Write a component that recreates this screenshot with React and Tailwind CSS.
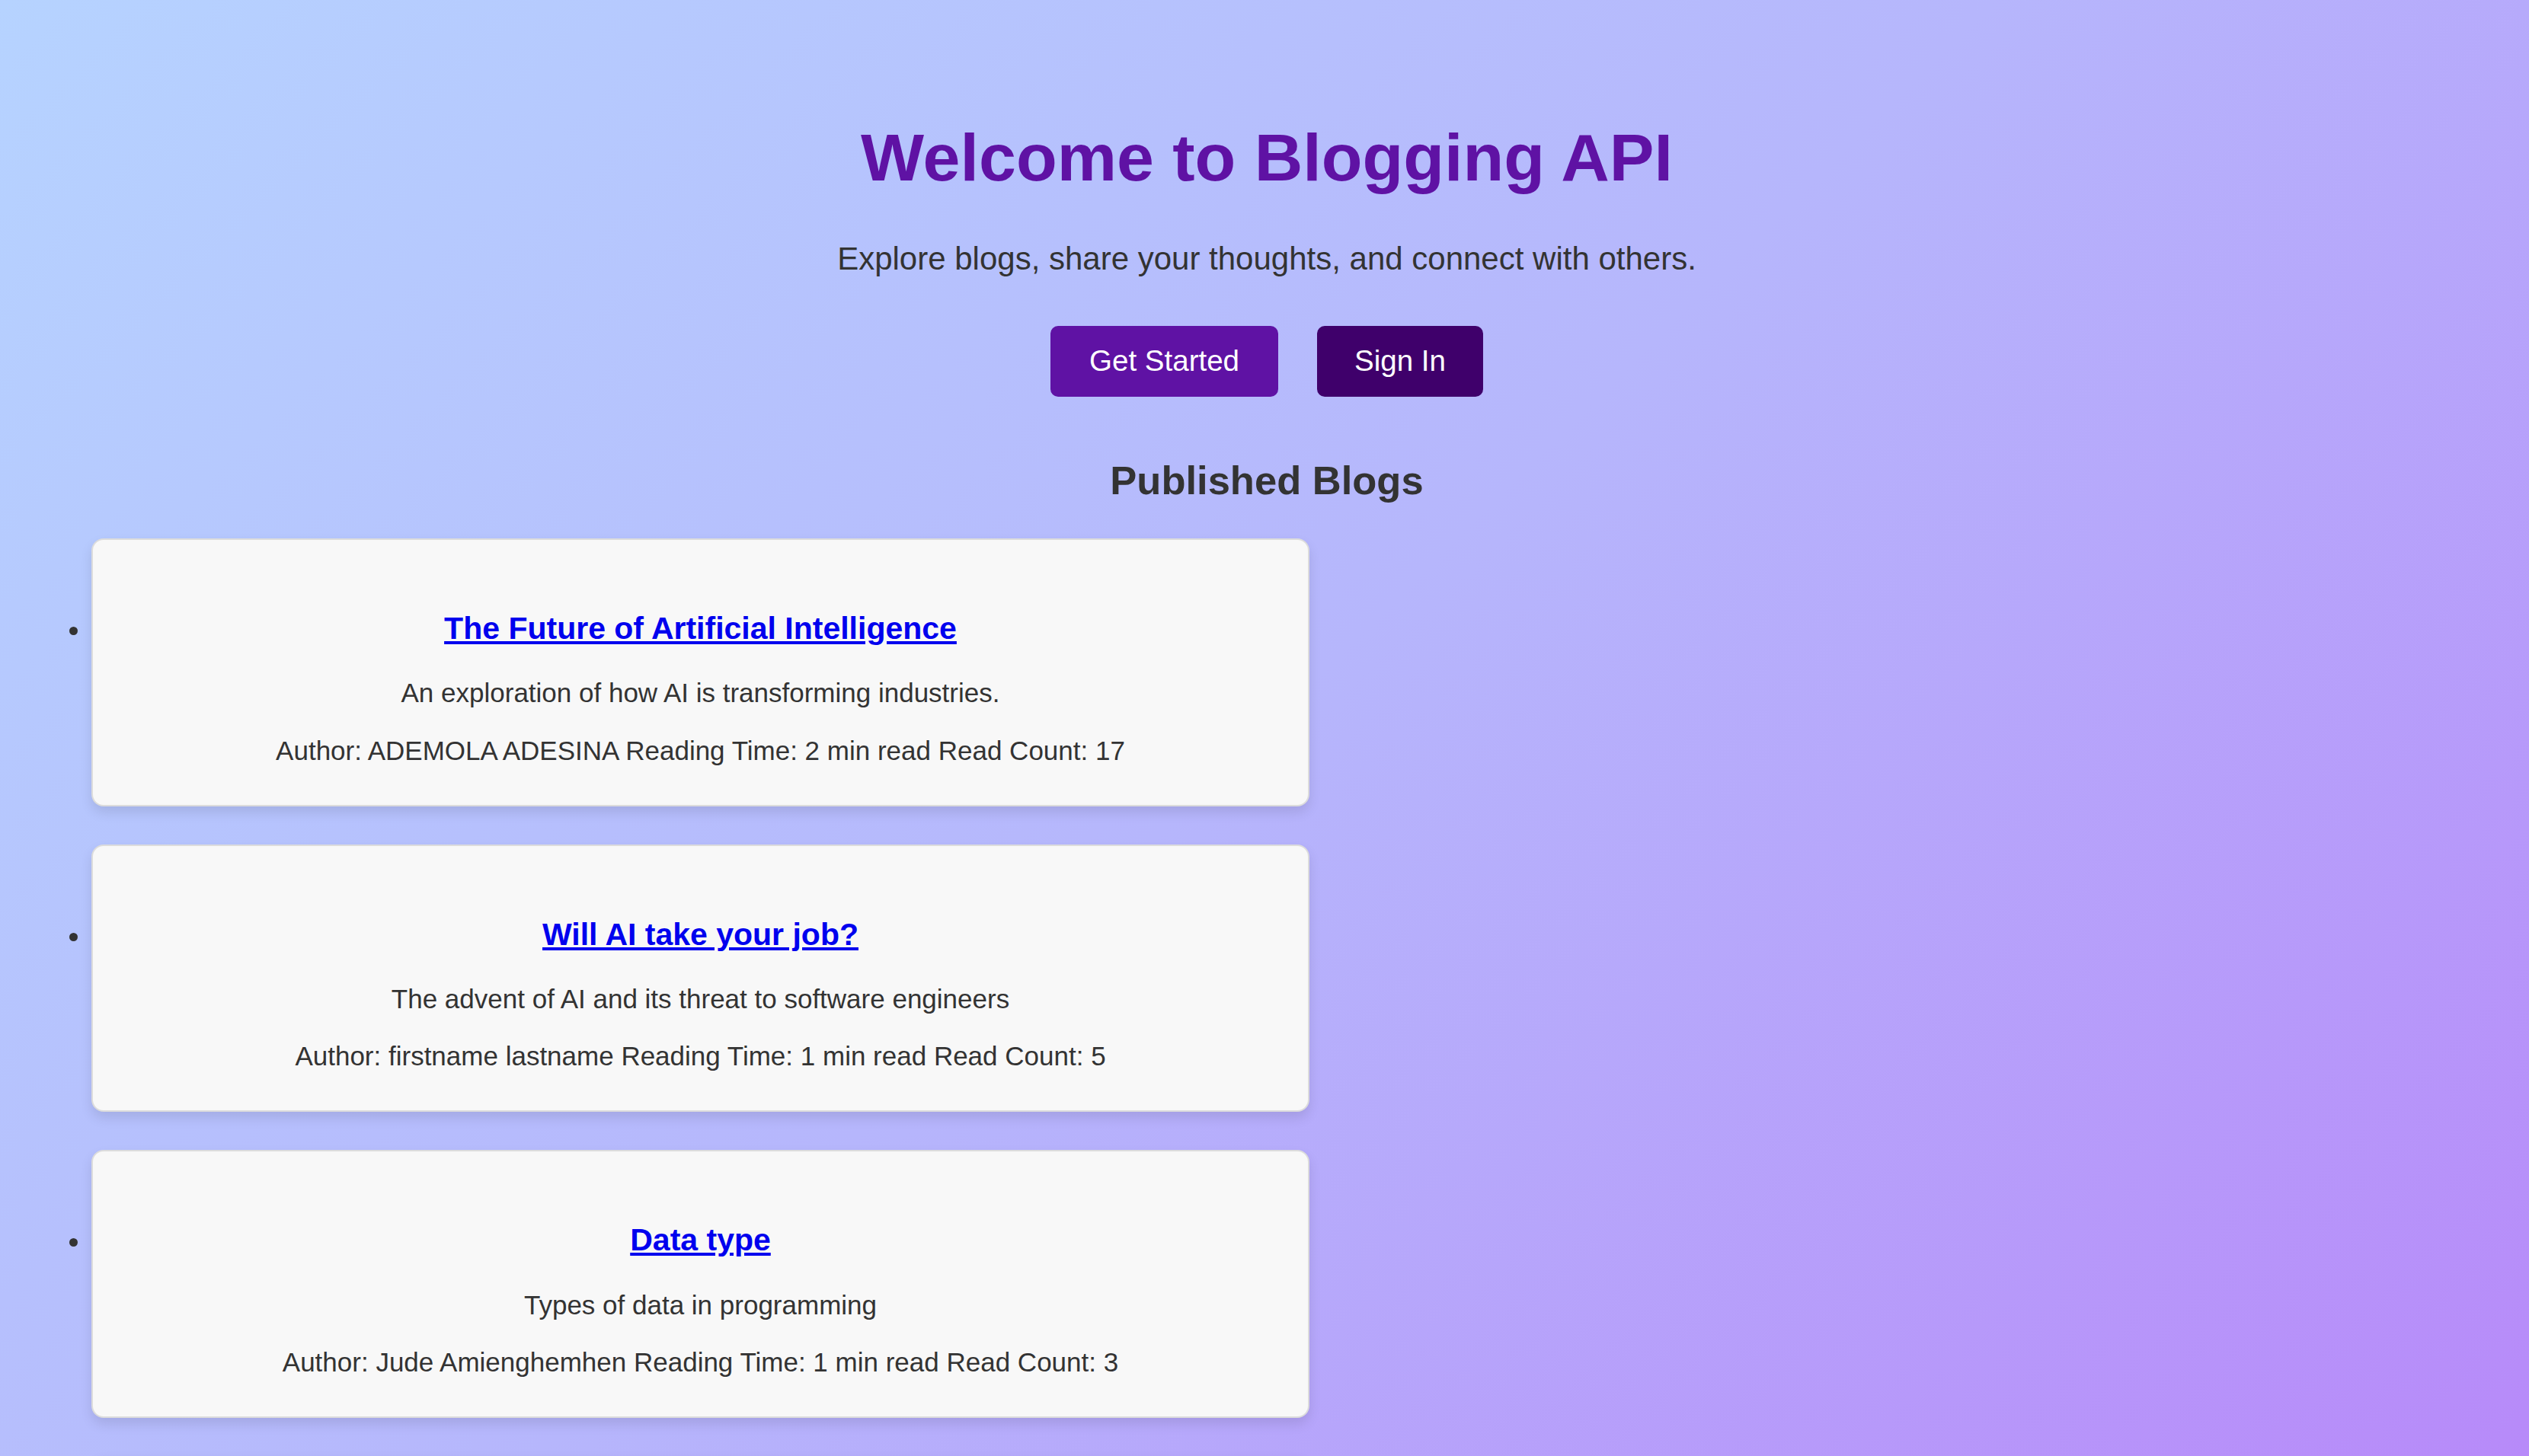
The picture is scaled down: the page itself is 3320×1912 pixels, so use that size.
const blogs = [
  {
    title: 'The Future of Artificial Intelligence',
    description: 'An exploration of how AI is transforming industries.',
    author: 'ADEMOLA ADESINA',
    readingTime: '2 min read',
    readCount: 17,
  },
  {
    title: 'Will AI take your job?',
    description: 'The advent of AI and its threat to software engineers',
    author: 'firstname lastname',
    readingTime: '1 min read',
    readCount: 5,
  },
  {
    title: 'Data type',
    description: 'Types of data in programming',
    author: 'Jude Amienghemhen',
    readingTime: '1 min read',
    readCount: 3,
  },
  {
    title: 'Getting started with Node.js',
    description: 'A beginner friendly introduction to Node.js',
    author: 'ADEMOLA ADESINA',
    readingTime: '1 min read',
    readCount: 2,
  },
];

const BlogCard = ({ blog }) => (
  <li className="mb-[50px]">
    <div className="w-[1599px] rounded-[16px] border-2 border-[#dcdcdc] bg-[#f8f8f8] pt-[93px] pb-[51px] text-center shadow-[0_8px_16px_rgba(0,0,0,0.1)]">
      <h3 className="text-[41px] font-bold leading-[1.15]">
        <a href="#" className="text-[#0000ee] underline">
          {blog.title}
        </a>
      </h3>
      <p className="mt-[41px] text-[35px] leading-[1.15]">{blog.description}</p>
      <p className="mt-[35px] text-[35px] leading-[1.15]">
        Author: {blog.author} Reading Time: {blog.readingTime} Read Count: {blog.readCount}
      </p>
    </div>
  </li>
);

const App = () => {
  return (
    <div className="min-h-screen bg-fixed bg-[linear-gradient(135deg,#b6d3ff_0%,#b6b6fc_50%,#b78af9_100%)] font-['Liberation_Sans',Arial,sans-serif] text-[#333333]">
      <section className="flex flex-col items-center pt-[156px] pl-[6px] text-center">
        <h1 className="text-[88px] font-bold leading-[1.15] text-[#5f12a4]">Welcome to Blogging API</h1>
        <p className="mt-[59px] text-[42px] leading-[1.15]">
          Explore blogs, share your thoughts, and connect with others.
        </p>
        <div className="mt-[64px] flex gap-[51px]">
          <button className="rounded-[10px] bg-[#5f12a4] px-[51px] py-[24px] text-[38.5px] leading-[1.15] text-white">
            Get Started
          </button>
          <button className="rounded-[10px] bg-[#3f006b] px-[49px] py-[24px] text-[38.5px] leading-[1.15] text-white">
            Sign In
          </button>
        </div>
        <h2 className="mt-[80px] text-[52.5px] font-bold leading-[1.15]">Published Blogs</h2>
      </section>

      <ul className="mt-[46px] list-disc pl-[120px] text-[38px]">
        {blogs.map((blog) => (
          <BlogCard key={blog.title} blog={blog} />
        ))}
      </ul>
    </div>
  );
};

export default App;
